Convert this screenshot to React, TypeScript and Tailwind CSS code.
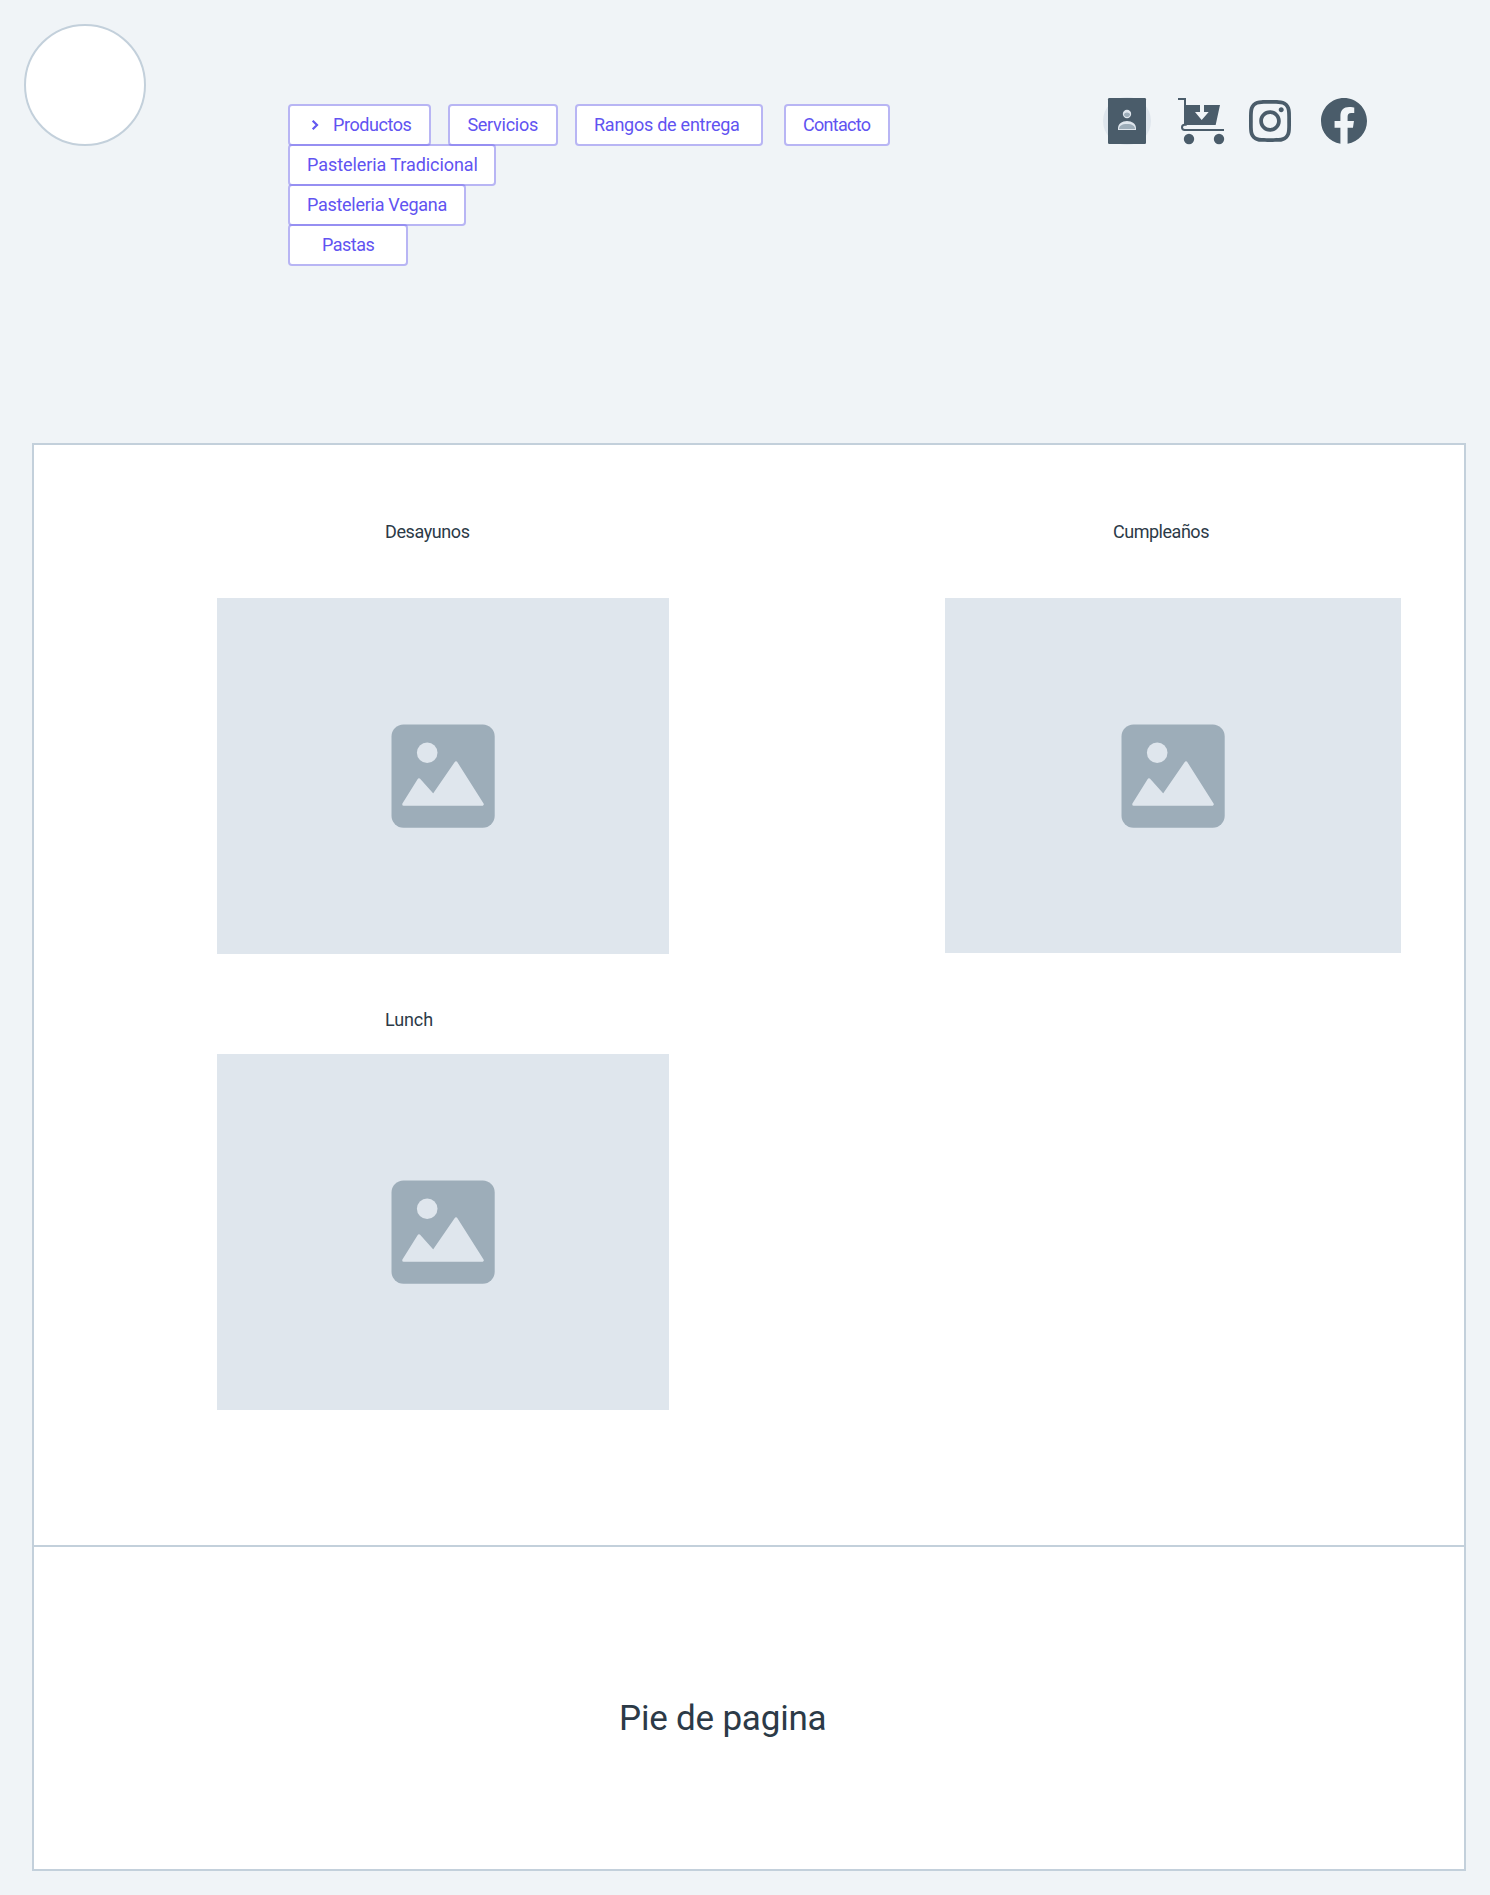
import type { ReactNode } from "react";
import { FaInstagram } from "react-icons/fa";

function NavButton({ className, children }: { className: string; children: ReactNode }) {
  return (
    <button
      className={
        "flex h-[42px] shrink-0 items-center rounded border-2 border-[#6358f0]/40 bg-white bg-clip-padding text-left text-[18px] leading-[38px] font-normal whitespace-nowrap text-[#6153f1] " +
        className
      }
    >
      {children}
    </button>
  );
}

function ContactIcon() {
  return (
    <svg viewBox="36 48 150 150" className="size-[50px]">
      <circle cx="111" cy="123" r="72" fill="#dfe6ed" />
      <rect x="54" y="54" width="114" height="138" rx="4" fill="#4a5c6a" />
      <circle cx="111" cy="102" r="12.5" fill="#dfe6ed" />
      <path d="M102 102a10 8 0 0 1 18 0a9 9 0 0 1-18 0z" fill="#9dadb9" />
      <path d="M84 150v-5c0-13 12-22 27-22s27 9 27 22v5z" fill="#dfe6ed" />
      <path d="M87 147c0-9 8-15 24-15s24 6 24 15z" fill="#9dadb9" />
    </svg>
  );
}

function CartIcon() {
  return (
    <svg viewBox="261 51 144 144" className="size-12" fill="#4a5c6a">
      <path d="M264 54h24v21h42v21h-15l20 24 21-24h-14V75h48l-13 60h-95V60h-18z" />
      <path d="M290 134h-6a8 8 0 0 0 0 16h118" fill="none" stroke="#4a5c6a" strokeWidth="6" />
      <circle cx="297" cy="177" r="15.5" />
      <circle cx="387" cy="177" r="15.5" />
    </svg>
  );
}

function FacebookIcon() {
  return (
    <svg viewBox="8 8 496 496" className="size-[46px]" fill="#4a5c6a">
      <path d="M504 256C504 119 393 8 256 8S8 119 8 256c0 123.78 90.69 226.38 209.25 245V327.69h-63V256h63v-54.64c0-62.15 37-96.48 93.67-96.48 27.14 0 55.52 4.84 55.52 4.84v61h-31.28c-30.8 0-40.41 19.12-40.41 38.73V256h68.78l-11 71.69h-57.78V501C413.31 482.38 504 379.78 504 256z" />
    </svg>
  );
}

function Placeholder({ className }: { className: string }) {
  return (
    <div className={"flex items-center justify-center bg-[#dfe6ed] " + className}>
      <svg viewBox="0 0 104 104" className="size-[104px]">
        <rect x="0.5" y="0.5" width="103.2" height="103.2" rx="12" fill="#9dadb9" />
        <circle cx="36.2" cy="28.8" r="10.3" fill="#dfe6ed" />
        <path
          d="M12.7 80.2L28 55.8L42.3 71.8L65 38.8L91.3 80.2z"
          fill="#dfe6ed"
          stroke="#dfe6ed"
          strokeWidth="3"
          strokeLinejoin="round"
        />
      </svg>
    </div>
  );
}

export default function App() {
  return (
    <div className="h-[1895px] w-[1490px] bg-[#f0f4f7] font-[Roboto,sans-serif] text-[#2c3a47]">
      <header className="flex h-[443px] items-start pl-6">
        <div className="mt-6 size-[122px] shrink-0 rounded-full border-2 border-[#c3d0db] bg-white" />

        <nav className="mt-[104px] ml-[142px] flex w-[602px] items-start">
          <div className="flex w-[160px] flex-col items-start -space-y-[2px]">
            <NavButton className="w-[143px] pl-[21px]">
              <svg viewBox="0 0 8 12" className="mr-[14px] h-3 w-2" fill="none">
                <path d="M1.7 1.8L6 6L1.7 10.2" stroke="#6358f0" strokeWidth="2.2" />
              </svg>
              <span className="tracking-[-0.44px]">Productos</span>
            </NavButton>
            <NavButton className="w-[208px] pl-[17px] tracking-[-0.07px]">Pasteleria Tradicional</NavButton>
            <NavButton className="w-[178px] pl-[17px] tracking-[-0.28px]">Pasteleria Vegana</NavButton>
            <NavButton className="w-[120px] pl-[32px] tracking-[-0.5px]">Pastas</NavButton>
          </div>
          <NavButton className="w-[110px] pl-[17.4px] tracking-[-0.27px]">Servicios</NavButton>
          <NavButton className="ml-[17px] w-[188px] pl-[17px] tracking-[-0.25px]">Rangos de entrega</NavButton>
          <NavButton className="ml-[21px] w-[106px] pl-[17px] tracking-[-0.7px]">Contacto</NavButton>
        </nav>

        <div className="mt-24 ml-[212px] flex h-[50px] items-center">
          <ContactIcon />
          <div className="ml-[25px]">
            <CartIcon />
          </div>
          <FaInstagram className="ml-[21px] size-12 text-[#4a5c6a]" />
          <div className="ml-[27px]">
            <FacebookIcon />
          </div>
        </div>
      </header>

      <main className="ml-8 flex h-[1104px] w-[1434px] border-2 border-[#c3d0db] bg-white pt-[75px] pl-[183px]">
        <div className="flex w-[452px] flex-col">
          <h2 className="pl-[168px] text-[18px] leading-6 tracking-[-0.41px]">Desayunos</h2>
          <Placeholder className="mt-[54px] h-[356px]" />
          <h2 className="mt-[54px] pl-[168px] text-[18px] leading-6 tracking-[-0.1px]">Lunch</h2>
          <Placeholder className="mt-[22px] h-[356px]" />
        </div>
        <div className="ml-[276px] flex w-[456px] flex-col">
          <h2 className="pl-[168px] text-[18px] leading-6 tracking-[-0.48px]">Cumpleaños</h2>
          <Placeholder className="mt-[54px] h-[355px]" />
        </div>
      </main>

      <footer className="ml-8 h-[324px] w-[1434px] border-2 border-t-0 border-[#c3d0db] bg-white pt-[152px] pl-[585px]">
        <p className="text-[35px] leading-10 tracking-[-0.2px]">Pie de pagina</p>
      </footer>
    </div>
  );
}
